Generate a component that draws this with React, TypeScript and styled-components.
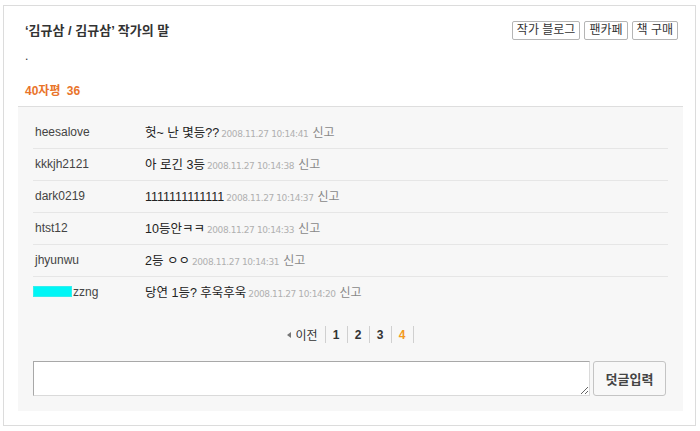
import React from 'react';
import styled, { createGlobalStyle } from 'styled-components';

interface CommentType {
  id: number;
  user: string;
  masked?: boolean;
  text: string;
  date: string;
}

const comments: CommentType[] = [
  { id: 1, user: 'heesalove', text: '헛~ 난 몇등??', date: '2008.11.27 10:14:41' },
  { id: 2, user: 'kkkjh2121', text: '아 로긴 3등', date: '2008.11.27 10:14:38' },
  { id: 3, user: 'dark0219', text: '1111111111111', date: '2008.11.27 10:14:37' },
  { id: 4, user: 'htst12', text: '10등안ㅋㅋ', date: '2008.11.27 10:14:33' },
  { id: 5, user: 'jhyunwu', text: '2등 ㅇㅇ', date: '2008.11.27 10:14:31' },
  { id: 6, user: 'zzng', masked: true, text: '당연 1등? 후욱후욱', date: '2008.11.27 10:14:20' },
];

const pages = [1, 2, 3, 4];

function App() {
  return (
    <>
      <GlobalStyle />
      <Wrap>
        <Header>
          <Title>‘김규삼 / 김규삼’ 작가의 말</Title>
          <Links>
            <LinkButton>작가 블로그</LinkButton>
            <LinkButton>팬카페</LinkButton>
            <LinkButton>책 구매</LinkButton>
          </Links>
        </Header>
        <Intro>.</Intro>
        <Count>40자평 36</Count>
        <CommentBox>
          <List>
            {comments.map((c) => (
              <Row key={c.id}>
                <Name>
                  {c.masked && <Mask />}
                  {c.user}
                </Name>
                <Body>
                  {c.text}
                  <Date>{c.date}</Date>
                  <Report>신고</Report>
                </Body>
              </Row>
            ))}
          </List>
          <Paging>
            <PageItem>
              <Arrow />
              이전
            </PageItem>
            {pages.map((p) => (
              <PageItem key={p} $num $current={p === 4}>
                {p}
              </PageItem>
            ))}
          </Paging>
          <WriteRow>
            <Input />
            <Submit>덧글입력</Submit>
          </WriteRow>
        </CommentBox>
      </Wrap>
    </>
  );
}

export default App;

// Styles
const GlobalStyle = createGlobalStyle`
  body {
    margin: 0;
    background: #fff;
    font-family: "Liberation Sans", "Noto Sans CJK KR", sans-serif;
    font-size: 12px;
    color: #333;
  }
`;

const Wrap = styled.div`
  box-sizing: border-box;
  width: 693px;
  height: 421px;
  margin: 5px 0 0 3px;
  border: 1px solid #dcdcdc;
`;

const Header = styled.div`
  display: flex;
  justify-content: space-between;
  align-items: flex-start;
  padding: 15px 17px 0 21px;
`;

const Title = styled.h2`
  margin: 0;
  font-size: 13px;
  line-height: 20px;
  height: 19px;
  font-weight: bold;
  color: #333;
`;

const Links = styled.div`
  display: flex;
  gap: 4px;
`;

const LinkButton = styled.button`
  height: 19px;
  padding: 0 4px;
  border: 1px solid #b5b5b5;
  border-radius: 2px;
  background: #fff;
  font-family: "Liberation Sans", "Noto Sans CJK KR", sans-serif;
  font-size: 12px;
  line-height: 17px;
  color: #333;
`;

const Intro = styled.p`
  margin: 8px 0 0 21px;
  font-size: 12px;
  line-height: 16px;
  color: #333;
`;

const Count = styled.div`
  margin: 19px 0 0 21px;
  font-size: 12px;
  line-height: 16px;
  font-weight: bold;
  color: #e9742a;
  word-spacing: 3px;
`;

const CommentBox = styled.div`
  margin: 7px 12px 0 14px;
  padding: 10px 15px 15px;
  border-top: 1px solid #dedede;
  background: #f7f7f7;
`;

const List = styled.ul`
  margin: 0;
  padding: 0;
  list-style: none;
`;

const Row = styled.li`
  display: flex;
  align-items: center;
  height: 31px;
  border-bottom: 1px solid #e6e6e6;
  &:last-child {
    border-bottom: 0;
  }
`;

const Name = styled.span`
  display: flex;
  align-items: center;
  width: 110px;
  padding-left: 2px;
  margin-top: -2px;
  color: #444;
  font-size: 12px;
`;

const Mask = styled.span`
  display: inline-block;
  width: 39px;
  height: 11px;
  margin: 0 1px 0 -2px;
  background: #00f6f6;
  border: 1px solid #3ee;
  box-sizing: border-box;
`;

const Body = styled.span`
  margin-top: -2px;
  font-size: 12.5px;
  color: #222;
`;

const Date = styled.span`
  margin-left: 2px;
  font-family: "DejaVu Sans", "Liberation Sans", sans-serif;
  font-size: 9px;
  letter-spacing: -0.4px;
  color: #b0b0b0;
`;

const Report = styled.span`
  margin-left: 4px;
  font-size: 12px;
  color: #888;
`;

const Paging = styled.div`
  display: flex;
  justify-content: center;
  margin-top: 18px;
`;

const PageItem = styled.span<{ $num?: boolean; $current?: boolean }>`
  display: flex;
  align-items: center;
  justify-content: center;
  height: 17px;
  padding: ${(p) => (p.$num ? '0' : '0 7px 0 0')};
  width: ${(p) => (p.$num ? '21px' : 'auto')};
  border-right: 1px solid #d0d0d0;
  font-size: 12px;
  font-weight: ${(p) => (p.$num ? 'bold' : 'normal')};
  color: ${(p) => (p.$current ? '#f39a1e' : '#333')};
`;

const Arrow = styled.span`
  width: 0;
  height: 0;
  margin-right: 4px;
  border-top: 3px solid transparent;
  border-bottom: 3px solid transparent;
  border-right: 4px solid #777;
`;

const WriteRow = styled.div`
  display: flex;
  gap: 3px;
  margin-top: 18px;
`;

const Input = styled.textarea`
  box-sizing: border-box;
  width: 557px;
  height: 35px;
  margin: 0;
  border: 1px solid;
  border-color: #a8a8a8 #dadada #dadada #a8a8a8;
  background: #fff;
  resize: both;
  outline: none;
`;

const Submit = styled.button`
  box-sizing: border-box;
  width: 73px;
  height: 35px;
  border: 1px solid #c4c4c4;
  border-radius: 3px;
  background: #f8f8f8;
  font-family: "Liberation Sans", "Noto Sans CJK KR", sans-serif;
  font-size: 13px;
  font-weight: bold;
  color: #444;
`;
